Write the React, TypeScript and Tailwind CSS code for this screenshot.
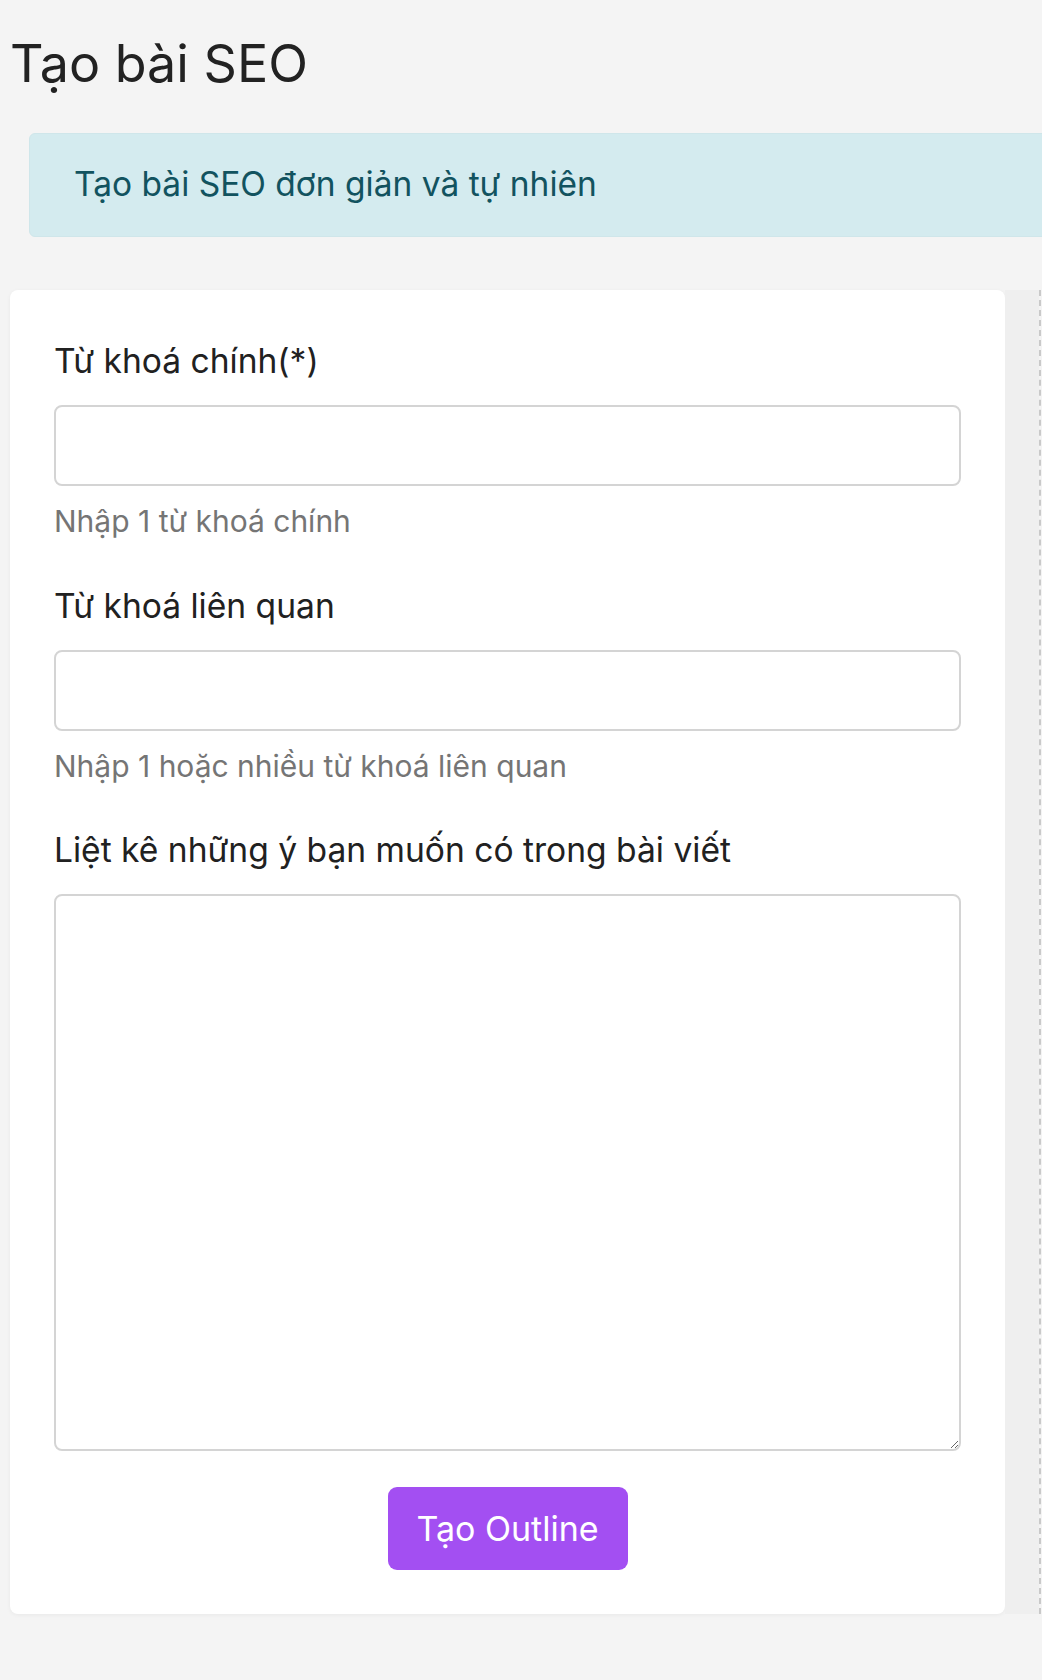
import { useState } from 'react';

function FieldLabel({ children }: { children: React.ReactNode }) {
  return <label className="block text-[33.6px] leading-[51px] text-[#212121] mb-[19px]">{children}</label>;
}

function HelpText({ children }: { children: React.ReactNode }) {
  return <p className="mt-[13px] text-[30px] leading-[45px] text-[#757575]">{children}</p>;
}

export default function App() {
  const [mainKeyword, setMainKeyword] = useState('');
  const [relatedKeywords, setRelatedKeywords] = useState('');
  const [ideas, setIdeas] = useState('');

  return (
    <div
      className="min-h-screen w-full overflow-hidden bg-[#f4f4f4]"
      style={{ fontFamily: 'Inter, "Noto Sans", "Liberation Sans", sans-serif' }}
    >
      {/* tiêu đề */}
      <h1 className="pt-[30px] pl-[10px] text-[52px] leading-[67px] font-normal text-[#222]">Tạo bài SEO</h1>

      {/* thông báo */}
      <div className="mt-[36px] ml-[29px] w-[1060px] rounded-[6px] border border-[#cfe6ea] bg-[#d4ebef] pl-[44px] pt-[25px] pb-[26px]">
        <p className="text-[33.5px] leading-[51px] text-[#12535f]">Tạo bài SEO đơn giản và tự nhiên</p>
      </div>

      <div className="mt-[53px] flex items-stretch">
        {/* form */}
        <div className="ml-[10px] w-[995px] shrink-0 rounded-[8px] bg-white px-[44px] pt-[45px] pb-[44px] shadow-[0_1px_4px_rgba(0,0,0,0.05)]">
          <div>
            <FieldLabel>Từ khoá chính(*)</FieldLabel>
            <input
              value={mainKeyword}
              onChange={(e) => setMainKeyword(e.target.value)}
              className="block h-[81px] w-full rounded-[8px] border-2 border-[#d4d4d4] bg-white px-4 text-[32px] outline-none"
            />
            <HelpText>Nhập 1 từ khoá chính</HelpText>
          </div>

          <div className="mt-[36px]">
            <FieldLabel>Từ khoá liên quan</FieldLabel>
            <input
              value={relatedKeywords}
              onChange={(e) => setRelatedKeywords(e.target.value)}
              className="block h-[81px] w-full rounded-[8px] border-2 border-[#d4d4d4] bg-white px-4 text-[32px] outline-none"
            />
            <HelpText>Nhập 1 hoặc nhiều từ khoá liên quan</HelpText>
          </div>

          <div className="mt-[35px]">
            <FieldLabel>Liệt kê những ý bạn muốn có trong bài viết</FieldLabel>
            <textarea
              value={ideas}
              onChange={(e) => setIdeas(e.target.value)}
              className="block h-[557px] w-full resize-y rounded-[8px] border-2 border-[#d4d4d4] bg-white p-4 text-[32px] outline-none"
            />
          </div>

          <div className="mt-[36px] flex justify-center">
            <button className="h-[83px] w-[240px] rounded-[9px] bg-[#a34ff2] text-[34px] text-white">Tạo Outline</button>
          </div>
        </div>

        {/* cột bên phải */}
        <div className="w-[34px] shrink-0 bg-[#efefef]" />
        <div className="w-[2px] shrink-0 border-l-2 border-dashed border-[#c9c9c9]" />
      </div>
    </div>
  );
}
